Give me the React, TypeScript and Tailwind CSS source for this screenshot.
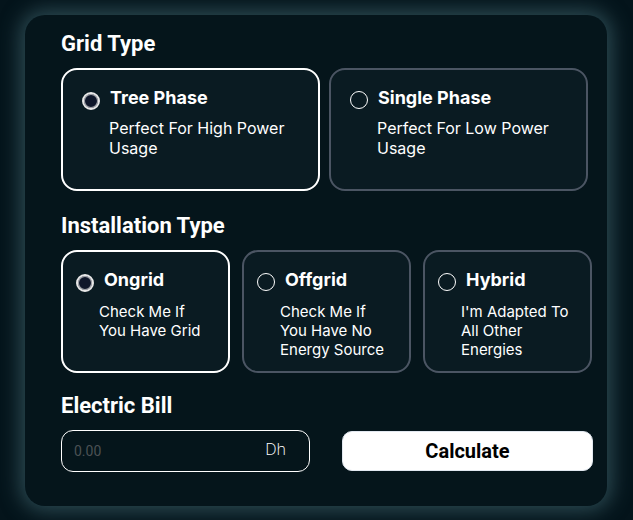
import { useState } from "react";

type Option = { title: string; text: string };

const gridTypes: Option[] = [
  { title: "Tree Phase", text: "Perfect For High Power Usage" },
  { title: "Single Phase", text: "Perfect For Low Power Usage" },
];

const installationTypes: Option[] = [
  { title: "Ongrid", text: "Check Me If You Have Grid" },
  { title: "Offgrid", text: "Check Me If You Have No Energy Source" },
  { title: "Hybrid", text: "I'm Adapted To All Other Energies" },
];

type CardProps = {
  option: Option;
  name: string;
  compact?: boolean;
  checked: boolean;
  onSelect: () => void;
};

function OptionCard({ option, name, compact, checked, onSelect }: CardProps) {
  return (
    <label
      className={`flex min-h-[123px] min-w-0 flex-1 cursor-pointer items-start rounded-2xl border-2 bg-[#0a1b22] pt-4 ${
        compact ? "pl-[13px] pr-2" : "pl-[19px] pr-6"
      } ${checked ? "border-white" : "border-[#4b5563]"}`}
    >
      <input
        type="radio"
        name={name}
        checked={checked}
        onChange={onSelect}
        className={`size-[18px] shrink-0 appearance-none rounded-full ${
          checked
            ? "mt-[6px] border-2 border-[#e8e8e8] bg-[#0f172a] shadow-[inset_0_0_0_1px_#a3a5ab]"
            : "mt-[5px] border border-white"
        }`}
      />
      <span className={compact ? "pl-[5px]" : "pl-[9px]"}>
        <span
          className={`block text-[18px] leading-6 font-bold ${compact ? "pl-[5px]" : "pl-px"}`}
        >
          {option.title}
        </span>
        <span
          className={`block ${
            compact ? "mt-[10px] max-w-[112px] text-[15px] leading-[19px]" : "mt-2 text-[16px] leading-5"
          }`}
        >
          {option.text}
        </span>
      </span>
    </label>
  );
}

export default function App() {
  const [grid, setGrid] = useState("Tree Phase");
  const [installation, setInstallation] = useState("Ongrid");
  const [bill, setBill] = useState("");

  return (
    <main className="min-h-screen overflow-hidden bg-[#04141b] pt-[15px] pr-[26px] pb-[14px] pl-[25px] font-['Inter',sans-serif] text-white">
      <form
        className="rounded-[20px] bg-[#05151b] pt-[14px] pr-[14px] pb-[34px] pl-9 shadow-[0_0_20px_5px_#2c4a52]"
        onSubmit={(e) => e.preventDefault()}
      >
        <fieldset>
          <legend className="mb-[9px] font-['Roboto',sans-serif] text-[22px] leading-[30px] font-bold">Grid Type</legend>
          <div className="flex gap-[9px] pr-[5px]">
            {gridTypes.map((o) => (
              <OptionCard
                key={o.title}
                option={o}
                name="grid"
                checked={grid === o.title}
                onSelect={() => setGrid(o.title)}
              />
            ))}
          </div>
        </fieldset>

        <fieldset className="mt-5">
          <legend className="mb-[9px] font-['Roboto',sans-serif] text-[22px] leading-[30px] font-bold">
            Installation Type
          </legend>
          <div className="flex gap-3 pr-px">
            {installationTypes.map((o) => (
              <OptionCard
                key={o.title}
                option={o}
                name="installation"
                compact
                checked={installation === o.title}
                onSelect={() => setInstallation(o.title)}
              />
            ))}
          </div>
        </fieldset>

        <label
          htmlFor="bill"
          className="mt-[18px] mb-[9px] block font-['Roboto',sans-serif] text-[22px] leading-[30px] font-bold"
        >
          Electric Bill
        </label>
        <div className="grid grid-cols-[249fr_251fr] items-center gap-8">
          <div className="flex h-[42px] min-w-0 items-center rounded-xl border border-white pr-[23px] pl-3">
            <input
              id="bill"
              inputMode="decimal"
              placeholder="0.00"
              value={bill}
              onChange={(e) => setBill(e.target.value)}
              className="min-w-0 flex-1 bg-transparent font-['Roboto',sans-serif] text-[14px] outline-none placeholder:text-[#4b5154]"
            />
            <span className="pb-1 font-['Open_Sans',sans-serif] text-[16px] leading-5 font-light">Dh</span>
          </div>
          <button
            type="submit"
            className="h-10 min-w-0 rounded-[10px] border border-[#e2e8f0] bg-white font-['Roboto',sans-serif] text-[20px] font-bold text-black"
          >
            Calculate
          </button>
        </div>
      </form>
    </main>
  );
}
